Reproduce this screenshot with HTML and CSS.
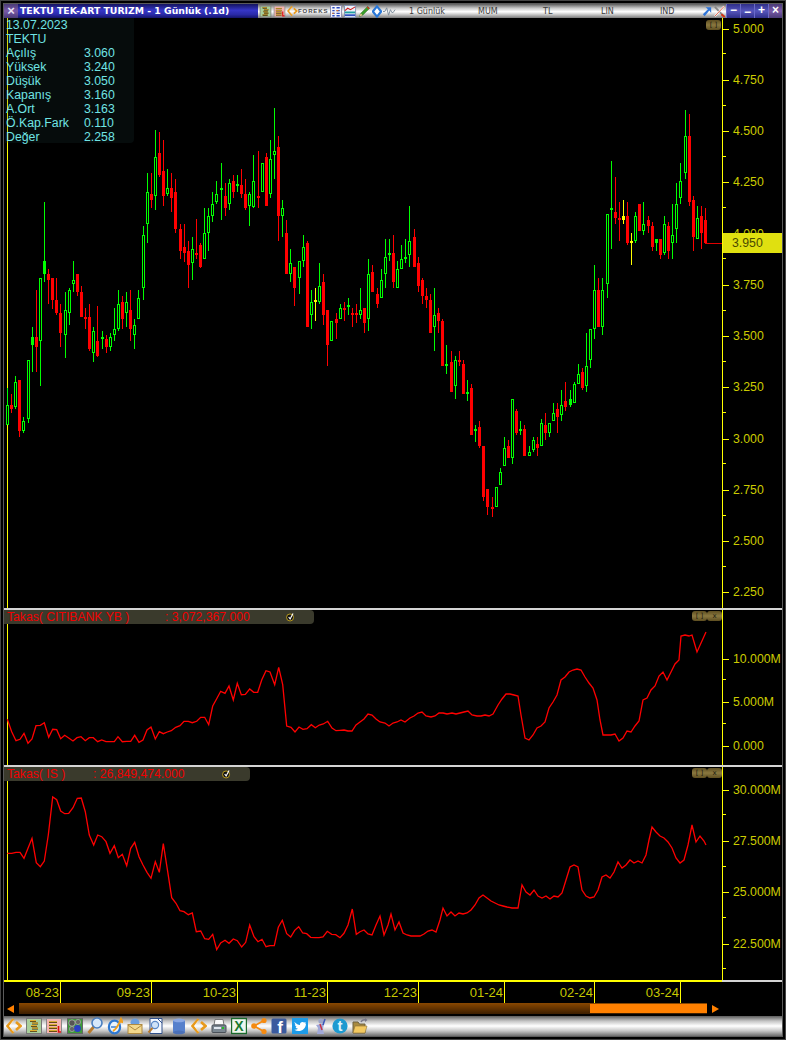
FILE: index.html
```html
<!DOCTYPE html>
<html lang="en">
<head>
    <meta charset="UTF-8">
    <title>TEKTU TEK-ART TURIZM</title>
    <link rel="stylesheet" href="styles.css">
</head>
<body>
    <svg class="icon-defs">
        <symbol id="i-chevrons" viewBox="0 0 16 18">
            <path d="M7.5 2 L1.5 9 L7.5 16" fill="none" stroke="#e89a1c" stroke-width="2.6"/>
            <path d="M10 5 L14.5 9 L10 13" fill="none" stroke="#e89a1c" stroke-width="2.6"/>
            <path d="M7.5 3.5 L3.5 9 L7.5 14.5" fill="none" stroke="#fff" stroke-width=".6"/>
        </symbol>
        <symbol id="i-coins" viewBox="0 0 16 18">
            <rect x=".5" y="1.5" width="15" height="15" fill="#a9cf9a" stroke="#777"/>
            <path d="M4 4 H10 M6 6.5 H12 M5 9 H11 M6 11.5 H12 M4 14 H11" stroke="#3c3418" stroke-width="2.2"/>
            <path d="M4 3.6 H10 M6 6.1 H12 M5 8.6 H11 M6 11.1 H12 M4 13.6 H11" stroke="#e0b030" stroke-width="1.1"/>
        </symbol>
        <symbol id="i-pink" viewBox="0 0 16 18">
            <rect x=".5" y="1.5" width="15" height="15" fill="#f4b4b0" stroke="#888"/>
            <path d="M3 5 H11 M3 8 H11 M3 11 H11 M3 14 H11" stroke="#5a4010" stroke-width="2"/>
            <path d="M3 4.6 H11 M3 7.6 H11 M3 10.6 H11 M3 13.6 H11" stroke="#e8b838" stroke-width="1"/>
            <path d="M12.5 9 V15 H15" fill="none" stroke="#d81010" stroke-width="1.6"/>
        </symbol>
        <symbol id="i-globe" viewBox="0 0 16 18">
            <rect x=".5" y="1.5" width="15" height="15" fill="#3d9a38" stroke="#666"/>
            <circle cx="5" cy="6" r="3.2" fill="#555" stroke="#ccc" stroke-width=".6"/>
            <circle cx="11" cy="5" r="2.6" fill="#666" stroke="#bbb" stroke-width=".6"/>
            <circle cx="5" cy="12" r="2.6" fill="#666" stroke="#bbb" stroke-width=".6"/>
            <circle cx="10.5" cy="11.5" r="3.4" fill="#2a3ec8"/>
        </symbol>
        <symbol id="i-lens" viewBox="0 0 16 18">
            <path d="M7 9.5 L1.5 16" stroke="#b87a2c" stroke-width="2.8"/>
            <circle cx="10" cy="6" r="5" fill="#d6e8fb" stroke="#4a7fc0" stroke-width="1.6"/>
        </symbol>
        <symbol id="i-ie" viewBox="0 0 16 18">
            <ellipse cx="7.5" cy="10" rx="5.6" ry="6.4" fill="#eaf3fc" stroke="#2f78d0" stroke-width="2.2"/>
            <path d="M4 10 H10" stroke="#2f78d0" stroke-width="1.4"/>
            <path d="M6 14 C10 12 12 7 14 2 L15.5 5 L12 4" fill="none" stroke="#f2a01e" stroke-width="2"/>
        </symbol>
        <symbol id="i-mail" viewBox="0 0 16 18">
            <ellipse cx="8" cy="5.5" rx="4.5" ry="4" fill="#6a9ede"/>
            <rect x="1" y="7.5" width="14" height="9" fill="#f2d88c" stroke="#b08a40"/>
            <path d="M1 8 L8 13 L15 8" fill="none" stroke="#b08a40"/>
        </symbol>
        <symbol id="i-doc" viewBox="0 0 16 18">
            <path d="M3 1.5 H15 V16.5 H3 Z" fill="#f4f8ff" stroke="#30508a"/>
            <path d="M11 2 L15 6" stroke="#30508a"/>
            <circle cx="8" cy="8" r="3.6" fill="#cfe2f8" stroke="#5a88c8" stroke-width="1.2"/>
            <path d="M5.5 11 L1.5 15.5" stroke="#b87a2c" stroke-width="2"/>
        </symbol>
        <symbol id="i-db" viewBox="0 0 16 18">
            <rect x="2" y="3" width="12" height="12.5" rx="1" fill="#5680cc"/>
            <ellipse cx="8" cy="3.4" rx="6" ry="1.8" fill="#8aa8e4"/>
            <ellipse cx="8" cy="15.4" rx="6" ry="1.8" fill="#4a70b8"/>
        </symbol>
        <symbol id="i-print" viewBox="0 0 16 18">
            <path d="M4 2.5 H12 L13 8 H3 Z" fill="#fafafa" stroke="#777"/>
            <rect x="1" y="8" width="14" height="7.5" rx="1" fill="#7a8690" stroke="#4a5058"/>
            <rect x="3" y="10" width="7" height="2" fill="#dfe6ee"/>
            <rect x="11" y="10" width="2" height="2" fill="#22c020"/>
        </symbol>
        <symbol id="i-share" viewBox="0 0 16 18">
            <path d="M13 3.5 L3 9 L13 14.5" fill="none" stroke="#f58a10" stroke-width="1.8"/>
            <circle cx="13" cy="3.5" r="2.6" fill="#f58a10"/>
            <circle cx="3" cy="9" r="2.8" fill="#f58a10"/>
            <circle cx="13" cy="14.5" r="2.6" fill="#f58a10"/>
        </symbol>
        <symbol id="i-tw" viewBox="0 0 16 18">
            <rect y="1" width="16" height="16" fill="#1d9be8"/>
            <path d="M2.5 5 C4.5 7 6 8 8 8 C7.6 5.5 10.5 4 12.2 5.6 L13.8 5 L13 6.6 L14 6.4 C13.8 11 10.5 14 6.5 14 C5 14 3.6 13.6 2.4 12.8 C3.8 12.9 5 12.5 6 11.8 C4.8 11.6 4 11 3.6 10 L4.8 10 C3.6 9.4 2.9 8.4 2.9 7.2 L4 7.6 C2.8 6.8 2.4 6 2.5 5 Z" fill="#fff"/>
        </symbol>
        <symbol id="i-person" viewBox="0 0 16 18">
            <circle cx="9" cy="4" r="2.6" fill="#9aa4c8"/>
            <path d="M4 8 L12 6.5 L11 12 L12 17 H5 L6 11 Z" fill="#a0a8d8"/>
            <path d="M8 7 L10 13" stroke="#c83040" stroke-width="1.4"/>
            <path d="M13 2 L11 8" stroke="#3a58b8" stroke-width="1.6"/>
        </symbol>
        <symbol id="i-folder" viewBox="0 0 16 18">
            <path d="M1 5 H6 L7.5 7 H13 V16 H1 Z" fill="#a88a40" stroke="#6c6040"/>
            <path d="M3 9 H15 L13 16 H1 Z" fill="#f2c860" stroke="#8a7038" stroke-width=".6"/>
            <path d="M9 5 C10 3 12 2.5 13.5 3" fill="none" stroke="#778" stroke-width="1.5"/>
            <path d="M13 1 L15.5 3 L13 5 Z" fill="#778"/>
        </symbol>
        <symbol id="i-calc" viewBox="0 0 14 14">
            <rect x=".5" y=".5" width="12" height="13" fill="#f2f2fa" stroke="#8888a8"/>
            <path d="M2.5 3 H5 M7 3 H10.5 M2.5 6 H5 M7 6 H10.5 M2.5 9 H5 M7 9 H10.5 M2.5 11.5 H5 M7 11.5 H10.5" stroke="#2a4ac0" stroke-width="1.5"/>
            <path d="M7 6 H9 M2.5 9 H4" stroke="#e07020" stroke-width="1.5"/>
        </symbol>
        <symbol id="i-chart" viewBox="0 0 14 14">
            <rect x=".5" y=".5" width="12" height="13" fill="#eef2fa" stroke="#8090b0"/>
            <path d="M1 6 L4 3.5 L7 5 L12 2" fill="none" stroke="#d02020" stroke-width="1.2"/>
            <path d="M1 8 H12" stroke="#20a0a0" stroke-width="2"/>
            <path d="M1 11 H12" stroke="#3050c0" stroke-width="2"/>
        </symbol>
        <symbol id="i-pen" viewBox="0 0 14 14">
            <path d="M1.5 12.5 L3 9 L10.5 1.5 L12.5 3.5 L5 11 Z" fill="#3ca02c" stroke="#2c6a20" stroke-width=".6"/>
            <path d="M1.5 12.5 L3 9 L5 11 Z" fill="#e8c890"/>
            <path d="M10 2 L12 4" stroke="#d83020" stroke-width="1.4"/>
        </symbol>
        <symbol id="i-diamond" viewBox="0 0 10 14">
            <path d="M5 1.5 L9.5 7 L5 12.5 L.5 7 Z" fill="#fff" stroke="#2a78d8" stroke-width="2.4"/>
        </symbol>
        <symbol id="i-wave" viewBox="0 0 14 14">
            <path d="M0 7 H2 L4 3 L6 11 L8 5 L9.5 8 H11 L13 5" fill="none" stroke="#7a8a9a"/>
        </symbol>
        <symbol id="i-arrow" viewBox="0 0 10 14">
            <path d="M.5 10 L6 4.5 L3.5 2.5 H9.5 V8.5 L7.5 6 L2.5 12 Z" fill="#2e74d8"/>
        </symbol>
        <symbol id="i-tools" viewBox="0 0 14 14">
            <path d="M2 2 L12 12.5" stroke="#888" stroke-width="2"/>
            <path d="M12 1.5 L2 12" stroke="#fff" stroke-width="2"/>
            <path d="M12 1.5 L2 12" stroke="#d84020" stroke-width=".9"/>
            <path d="M9 10 L12.5 13" stroke="#d83010" stroke-width="2"/>
        </symbol>
        <symbol id="i-check" viewBox="0 0 10 10">
            <circle cx="4.5" cy="5.5" r="3.9" fill="#111" stroke="#c8a820" stroke-width="1"/>
            <path d="M3 5 L4.6 7.2 L7.8 1" fill="none" stroke="#fff" stroke-width="1.3"/>
        </symbol>
    </svg>

    <div class="window">
        <div class="frame">
            <div class="titlebar">
                <span class="title-close">×</span>
                <div class="title-text">TEKTU TEK-ART TURIZM - 1 Günlük (.1d)</div>
                <div class="bar">
                    <svg class="bar-icon"><use href="#i-coins"/></svg>
                    <svg class="bar-icon"><use href="#i-pink"/></svg>
                    <div class="foreks">
                        <svg class="foreks-mark"><use href="#i-chevrons"/></svg>
                        <span>FOREKS</span>
                    </div>
                    <svg class="bar-icon"><use href="#i-calc"/></svg>
                    <svg class="bar-icon"><use href="#i-chart"/></svg>
                    <svg class="bar-icon"><use href="#i-pen"/></svg>
                    <svg class="bar-icon bar-icon-small"><use href="#i-diamond"/></svg>
                    <svg class="bar-icon"><use href="#i-wave"/></svg>
                    <div class="bar-menu">
                        <span class="menu-period">1 Günlük</span>
                        <span class="menu-mum">MUM</span>
                        <span class="menu-tl">TL</span>
                        <span class="menu-lin">LIN</span>
                        <span class="menu-ind">IND</span>
                    </div>
                    <svg class="bar-icon bar-icon-small"><use href="#i-arrow"/></svg>
                    <svg class="bar-icon"><use href="#i-tools"/></svg>
                </div>
                <div class="win-buttons">
                    <span class="win-btn">−</span>
                    <span class="win-btn win-btn-low">−</span>
                    <span class="win-btn">+</span>
                    <span class="win-btn win-btn-close">×</span>
                </div>
            </div>

            <div class="pane pane-price">
                <div class="plot">
                    <svg id="price-chart" class="chart" viewBox="4 18 718 590"></svg>
                    <div class="quote-box">
                        <div class="quote-row">13.07.2023</div>
                        <div class="quote-row">TEKTU</div>
                        <div class="quote-row"><span class="quote-label">Açılış</span><span>3.060</span></div>
                        <div class="quote-row"><span class="quote-label">Yüksek</span><span>3.240</span></div>
                        <div class="quote-row"><span class="quote-label">Düşük</span><span>3.050</span></div>
                        <div class="quote-row"><span class="quote-label">Kapanış</span><span>3.160</span></div>
                        <div class="quote-row"><span class="quote-label">A.Ort</span><span>3.163</span></div>
                        <div class="quote-row"><span class="quote-label">Ö.Kap.Fark</span><span>0.110</span></div>
                        <div class="quote-row"><span class="quote-label">Değer</span><span>2.258</span></div>
                    </div>
                    <div class="pane-buttons pane-buttons-top">
                        <span class="pane-btn">[ ]</span>
                    </div>
                </div>
                <div class="axis">
                    <div class="scale scale-price">
                        <div class="tick">5.000</div>
                        <div class="tick">4.750</div>
                        <div class="tick">4.500</div>
                        <div class="tick">4.250</div>
                        <div class="tick">4.000</div>
                        <div class="tick">3.750</div>
                        <div class="tick">3.500</div>
                        <div class="tick">3.250</div>
                        <div class="tick">3.000</div>
                        <div class="tick">2.750</div>
                        <div class="tick">2.500</div>
                        <div class="tick">2.250</div>
                    </div>
                    <div class="price-tag">3.950</div>
                </div>
            </div>
            <div class="divider"></div>

            <div class="pane pane-citi">
                <div class="plot">
                    <svg id="citi-chart" class="chart" viewBox="4 610 718 155"></svg>
                    <div class="legend legend-citi">
                        <span class="legend-name">Takas( CITIBANK YB )</span>
                        <span>: 3,072,367.000</span>
                        <svg class="legend-check"><use href="#i-check"/></svg>
                    </div>
                    <div class="pane-buttons">
                        <span class="pane-btn">[ ]</span>
                        <span class="pane-btn">x</span>
                    </div>
                </div>
                <div class="axis">
                    <div class="scale scale-citi">
                        <div class="tick">10.000M</div>
                        <div class="tick">5.000M</div>
                        <div class="tick">0.000</div>
                    </div>
                </div>
            </div>
            <div class="divider"></div>

            <div class="pane pane-is">
                <div class="plot">
                    <svg id="is-chart" class="chart" viewBox="4 767 718 213"></svg>
                    <div class="legend legend-is">
                        <span class="legend-name">Takas( IS )</span>
                        <span>: 26,849,474.000</span>
                        <svg class="legend-check"><use href="#i-check"/></svg>
                    </div>
                    <div class="pane-buttons">
                        <span class="pane-btn">[ ]</span>
                        <span class="pane-btn">x</span>
                    </div>
                </div>
                <div class="axis">
                    <div class="scale scale-is">
                        <div class="tick">30.000M</div>
                        <div class="tick">27.500M</div>
                        <div class="tick">25.000M</div>
                        <div class="tick">22.500M</div>
                    </div>
                </div>
            </div>
            <div class="divider divider-time"></div>

            <div class="time-axis">
                <span>08-23</span>
                <span>09-23</span>
                <span>10-23</span>
                <span>11-23</span>
                <span>12-23</span>
                <span>01-24</span>
                <span>02-24</span>
                <span>03-24</span>
            </div>

            <div class="scroller">
                <span class="arrow-left"></span>
                <div class="scroll-track"><div class="scroll-handle"></div></div>
                <span class="arrow-right"></span>
            </div>

            <div class="toolbar">
                <svg class="tool"><use href="#i-chevrons"/></svg>
                <svg class="tool"><use href="#i-coins"/></svg>
                <svg class="tool"><use href="#i-pink"/></svg>
                <svg class="tool"><use href="#i-globe"/></svg>
                <svg class="tool"><use href="#i-lens"/></svg>
                <svg class="tool"><use href="#i-ie"/></svg>
                <svg class="tool"><use href="#i-mail"/></svg>
                <svg class="tool"><use href="#i-doc"/></svg>
                <svg class="tool tool-sep"><use href="#i-db"/></svg>
                <svg class="tool"><use href="#i-chevrons"/></svg>
                <svg class="tool"><use href="#i-print"/></svg>
                <svg class="tool" viewBox="0 0 16 18">
                    <rect x=".5" y="1.5" width="15" height="15" fill="#eef6ee" stroke="#1a6a2c" stroke-width="1.4"/>
                    <text x="8" y="14" class="icon-letter icon-excel">X</text>
                </svg>
                <svg class="tool"><use href="#i-share"/></svg>
                <svg class="tool" viewBox="0 0 16 18">
                    <rect x=".5" y="1.5" width="15" height="15" rx="1.5" fill="#3a5a9e"/>
                    <text x="9" y="15.5" class="icon-letter icon-fb">f</text>
                </svg>
                <svg class="tool"><use href="#i-tw"/></svg>
                <svg class="tool"><use href="#i-person"/></svg>
                <svg class="tool" viewBox="0 0 16 18">
                    <circle cx="8" cy="9" r="7.6" fill="#1d9ad0"/>
                    <text x="8" y="14" class="icon-letter icon-t">t</text>
                </svg>
                <svg class="tool"><use href="#i-folder"/></svg>
            </div>
        </div>
    </div>

    <script src="chart.js"></script>
</body>
</html>
```

FILE: styles.css
```css
* {
    box-sizing: border-box;
}
body {
    margin: 0;
    background: #000;
    font-family: "Liberation Sans", Arial, sans-serif;
}
.icon-defs {
    display: block;
    width: 0;
    height: 0;
}
.icon-letter {
    font-family: "Liberation Sans", Arial, sans-serif;
    font-weight: bold;
    text-anchor: middle;
}
.icon-excel {
    font-size: 14px;
    fill: #1a7a30;
}
.icon-fb {
    font-size: 17px;
    fill: #fff;
}
.icon-t {
    font-size: 15px;
    fill: #dff4fc;
}
.window {
    width: 786px;
    height: 1040px;
    padding: 2px;
    background: #000;
    border: 1px solid #444;
}
.frame {
    display: flex;
    flex-direction: column;
    height: 100%;
    border: 1px solid #5a5a5a;
}

/* title bar */
.titlebar {
    display: flex;
    height: 14px;
    flex: none;
}
.title-close {
    width: 14px;
    background: linear-gradient(#4a3a78, #7a5aa8 50%, #4a3a78);
    color: #e8e0f4;
    font-size: 13px;
    font-weight: bold;
    line-height: 14px;
    text-align: center;
}
.title-text {
    width: 240px;
    padding-left: 2px;
    background: linear-gradient(#14145e, #3636c8 45%, #2a2aa8 75%, #14146a);
    color: #fff;
    font-family: "DejaVu Sans", sans-serif;
    font-size: 9.3px;
    font-weight: bold;
    line-height: 14px;
    white-space: nowrap;
}
.bar {
    display: flex;
    align-items: center;
    gap: 1px;
    width: 468px;
    padding-left: 1px;
    background: linear-gradient(#5c5c5c, #c8c8c8 30%, #fff 55%, #c8c8c8 75%, #7a7a7a);
}
.bar-icon {
    flex: none;
    width: 13px;
    height: 13px;
}
.bar-icon-small {
    width: 10px;
}
.foreks {
    display: flex;
    align-items: center;
    width: 42px;
    color: #4a4a4a;
    font-size: 6px;
    font-weight: bold;
    letter-spacing: 0.9px;
}
.foreks-mark {
    flex: none;
    width: 11px;
    height: 12px;
}
.bar-menu {
    display: flex;
    color: #3c3c3c;
    font-family: "DejaVu Sans", sans-serif;
    font-size: 8px;
    line-height: 15px;
}
.menu-period {
    width: 81px;
    padding-left: 12px;
}
.menu-mum {
    width: 65px;
}
.menu-tl {
    width: 58px;
}
.menu-lin {
    width: 59px;
}
.menu-ind {
    width: 41px;
}
.win-buttons {
    display: flex;
}
.win-btn {
    width: 14px;
    background: linear-gradient(#2e2e88, #5656bc 50%, #2e2e88);
    border-left: 1px solid #6a6ac8;
    color: #fff;
    font-size: 12px;
    font-weight: bold;
    line-height: 13px;
    text-align: center;
}
.win-btn-low {
    line-height: 16px;
}
.win-btn-close {
    background: linear-gradient(#4a3a78, #7a5aa8 50%, #4a3a78);
}

/* chart panes */
.pane {
    display: flex;
    flex: none;
    overflow: hidden;
}
.pane-price {
    height: 590px;
}
.pane-citi {
    height: 155px;
}
.pane-is {
    height: 213px;
}
.plot {
    position: relative;
    width: 718px;
}
.chart {
    display: block;
    width: 718px;
    height: 100%;
    shape-rendering: crispEdges;
}
.divider {
    flex: none;
    height: 2px;
    background: #d4d4d4;
}
.divider-time {
    background: linear-gradient(to right, #ffff00 718px, #d4d4d4 718px);
}

/* value axis */
.axis {
    position: relative;
    width: 60px;
    border-left: 1px solid #ffff00;
    overflow: hidden;
}
.scale-price {
    margin-top: -14.9px;
}
.scale-citi {
    margin-top: 26.8px;
}
.scale-is {
    margin-top: -3.2px;
}
.tick {
    position: relative;
    display: flex;
    align-items: center;
    height: 51.25px;
    padding-left: 10px;
    color: #cccc00;
    font-size: 12.3px;
}
.scale-citi .tick {
    height: 43.5px;
}
.scale-is .tick {
    height: 51.4px;
}
.tick::before {
    content: "";
    position: absolute;
    left: 0;
    top: 50%;
    width: 6px;
    height: 1px;
    background: #ffff00;
}
.tick::after {
    content: "";
    position: absolute;
    left: 0;
    bottom: 0;
    width: 3px;
    height: 1px;
    background: #ffff00;
}
.price-tag {
    position: absolute;
    top: 215px;
    left: -1px;
    width: 60px;
    height: 20px;
    padding-left: 10px;
    background: #e0e010;
    color: #4a4a00;
    font-size: 12.3px;
    line-height: 20px;
}

/* overlays on the plots */
.quote-box {
    position: absolute;
    top: 0;
    left: 1px;
    width: 129px;
    height: 125px;
    padding: 0 0 0 1px;
    background: rgba(30, 60, 60, 0.2);
    border-radius: 0 0 4px 0;
    color: #70e4e4;
    font-size: 12.3px;
    line-height: 14px;
}
.quote-row {
    display: flex;
}
.quote-label {
    width: 78px;
}
.legend {
    position: absolute;
    top: 0;
    left: 0;
    display: flex;
    align-items: center;
    height: 14px;
    padding-left: 3px;
    padding-right: 19px;
    background: #3a3a2c;
    border-radius: 0 4px 4px 0;
    color: #f00000;
    font-size: 12.2px;
    white-space: nowrap;
}
.legend-citi {
    width: 310px;
}
.legend-is {
    width: 246px;
}
.legend-citi .legend-name {
    width: 158px;
}
.legend-is .legend-name {
    width: 86px;
}
.legend-check {
    width: 9px;
    height: 10px;
    margin-left: auto;
}
.pane-buttons {
    position: absolute;
    top: 1px;
    right: 0;
    display: flex;
}
.pane-buttons-top {
    top: 2px;
    right: 1px;
}
.pane-btn {
    width: 15px;
    height: 10px;
    background: linear-gradient(#5e4e20, #8a7840 50%, #5e4e20);
    border-radius: 3px;
    color: #1c1c10;
    font-family: "DejaVu Sans", sans-serif;
    font-size: 7px;
    line-height: 10px;
    text-align: center;
}

/* time axis and scroller */
.time-axis {
    display: grid;
    grid-template-columns: 57px 91px 86px 90px 91px 86px 90px 86px;
    flex: none;
    height: 21px;
}
.time-axis span {
    padding-right: 1px;
    border-right: 1px solid #ffff00;
    color: #c8c800;
    font-size: 13px;
    line-height: 21px;
    text-align: right;
}
.scroller {
    display: flex;
    align-items: center;
    flex: none;
    height: 11px;
    margin-bottom: 2px;
    padding-left: 3px;
}
.arrow-left {
    width: 0;
    height: 0;
    border-top: 4px solid transparent;
    border-bottom: 4px solid transparent;
    border-right: 7px solid #ff8000;
}
.arrow-right {
    width: 0;
    height: 0;
    margin-left: 5px;
    border-top: 4px solid transparent;
    border-bottom: 4px solid transparent;
    border-left: 7px solid #ff8000;
}
.scroll-track {
    display: flex;
    justify-content: flex-end;
    align-items: center;
    width: 688px;
    height: 11px;
    margin-left: 5px;
    background: linear-gradient(#8a4800, #3c1e00);
}
.scroll-handle {
    width: 117px;
    height: 9px;
    background: #ff8000;
}

/* bottom toolbar */
.toolbar {
    display: flex;
    align-items: center;
    gap: 4.2px;
    flex: none;
    height: 20px;
    padding-left: 2px;
    background: linear-gradient(#5c5c5c, #c4c4c4 25%, #fff 50%, #c4c4c4 75%, #6e6e6e);
}
.tool {
    flex: none;
    width: 16px;
    height: 18px;
}
.tool-sep {
    margin-left: 3px;
}
```

FILE: chart.js
```js
// Everything is traced from 3x crops, so each group has the page origin of its crop
// and the numbers are crop pixels: x, wick top, wick bottom, body top, body bottom, kind.
// kind: u = hollow green, U = solid green, d = solid red, y = solid yellow
const candleGroups = [
    { x: 0, y: 240, rows: [
        [22,444,555,496,555,'u'], [34,462,519,496,507,'d'], [46,408,507,427,501,'u'], [58,420,591,420,573,'d'],
        [70,531,579,543,573,'u'], [85,360,549,361,537,'u'], [97,261,396,291,315,'U'], [109,150,396,291,321,'d'],
        [121,114,438,114,303,'u'], [133,-114,126,63,102,'U']
    ] },
    { x: 0, y: 120, rows: [
        [145,447,552,462,480,'d'], [157,474,568,474,540,'d'], [169,474,584,540,580,'d'], [181,552,682,580,640,'d'],
        [196,516,714,571,644,'u'], [208,504,614,511,578,'u'], [220,423,516,481,491,'u'], [232,462,528,462,516,'d'],
        [244,498,591,516,591,'d'], [256,564,627,591,597,'d'], [268,552,693,591,688,'d'], [280,621,726,633,698,'u'],
        [292,558,711,663,708,'d'], [307,633,687,651,657,'U'], [319,645,699,657,681,'d'], [331,639,693,651,681,'u'],
        [343,564,663,627,645,'u'], [355,510,633,552,627,'u'], [367,528,627,546,597,'d'], [379,516,621,546,579,'u'],
        [391,510,663,570,627,'d'], [403,597,687,615,645,'u'], [415,510,597,535,597,'u'], [430,318,540,345,503,'u'],
        [442,159,369,216,312,'u'], [454,159,264,222,240,'d'], [466,30,270,111,228,'u'], [478,36,171,99,165,'d'],
        [490,60,258,153,228,'d'], [502,147,228,204,222,'u'], [514,159,276,204,234,'d'], [526,177,339,216,327,'d'],
        [541,312,417,327,393,'d'], [553,312,426,381,399,'d'], [565,363,504,393,435,'d'], [577,351,480,387,429,'u'],
        [589,297,417,399,405,'d']
    ] },
    { x: 200, y: 100, rows: [
        [1,430,505,435,500,'d'],
        [13,324,476,400,476,'u'], [25,324,453,348,398,'u'], [37,277,365,313,347,'u'], [49,243,312,283,305,'u'],
        [64,190,360,265,269,'U'], [76,250,348,289,323,'d'], [88,238,330,250,311,'u'], [100,225,294,244,275,'d'],
        [112,225,275,252,257,'U'], [124,207,294,256,282,'d'], [136,237,330,282,323,'d'], [148,277,378,283,317,'u'],
        [160,165,323,244,322,'u'], [175,153,323,288,293,'d'], [187,190,276,190,275,'u'], [199,160,318,172,318,'d'],
        [211,120,293,178,281,'u'], [223,24,237,154,164,'u'], [235,108,423,142,347,'d'], [247,300,411,325,347,'u'],
        [259,360,522,400,522,'d'], [271,447,546,490,521,'u'], [283,502,618,502,564,'d'], [298,484,582,484,533,'u'],
        [310,405,500,442,482,'u'], [322,423,682,430,682,'d'], [334,570,687,607,644,'u'], [346,564,663,600,606,'y'],
        [358,489,612,559,606,'u'], [370,522,675,546,645,'d'], [382,630,798,630,735,'d'], [394,663,722,664,722,'u'],
        [409,640,717,657,669,'d'], [421,612,657,625,656,'u'], [433,606,663,625,630,'d'], [445,594,645,615,621,'U'],
        [457,625,681,639,645,'d'], [469,612,669,639,645,'d'], [481,564,657,631,645,'u'], [493,625,699,625,669,'d'],
        [505,477,693,522,656,'u'], [517,496,576,516,576,'d'], [532,564,624,582,612,'d'], [544,507,594,541,593,'u'],
        [556,417,564,472,521,'u'], [568,417,483,459,465,'U'], [580,405,564,459,546,'d'], [592,483,564,508,563,'u'],
        [604,435,507,478,506,'u'], [616,417,488,471,477,'U'], [628,318,501,424,464,'u'], [643,387,501,411,501,'d'],
        [655,471,576,489,558,'d']
    ] },
    { x: 420, y: 230, rows: [
        [7,145,222,150,198,'d'], [19,174,234,198,210,'d'], [31,192,309,210,309,'d'], [43,174,363,255,290,'u'],
        [55,234,309,249,273,'d'], [67,267,408,274,408,'d'], [79,345,432,403,408,'U'], [94,363,486,396,486,'d'],
        [106,378,507,391,467,'u'], [118,363,408,390,396,'d'], [130,390,492,402,492,'d'], [142,450,513,486,492,'U'],
        [154,462,615,474,615,'d'], [166,585,636,597,603,'U'], [178,573,654,591,648,'d'], [190,648,813,648,801,'d'],
        [202,777,855,777,831,'d'], [217,801,861,831,837,'d'], [229,771,831,772,830,'u'], [241,714,765,727,764,'u'],
        [253,621,708,655,707,'u'], [265,630,684,648,684,'d'], [277,507,702,508,683,'u'], [289,537,615,543,609,'d'],
        [301,573,615,597,603,'U'], [313,585,678,597,678,'d'], [328,648,678,667,677,'u'], [340,621,666,631,660,'u'],
        [352,621,678,642,654,'d'], [364,567,648,580,647,'u'], [376,549,630,585,609,'d'], [388,580,621,580,608,'u'],
        [400,519,573,550,572,'u'], [412,519,609,537,561,'d'], [424,480,573,526,554,'u'], [436,456,543,513,531,'d'],
        [451,480,531,507,525,'U'], [463,456,519,463,518,'u'], [475,402,462,433,461,'u'], [487,414,480,426,474,'d'],
        [499,309,486,409,467,'u'], [511,297,414,298,389,'u'], [523,105,327,181,296,'u'], [535,144,291,180,291,'d'],
        [547,144,315,181,290,'u']
    ] },
    { x: 600, y: 100, rows: [
        [22,343,594,343,551,'u'], [34,183,447,324,329,'U'], [46,231,372,336,354,'d'], [58,306,423,354,360,'d'],
        [70,300,372,348,360,'y'], [82,306,435,348,429,'d'], [94,399,495,423,429,'y'], [106,336,429,348,423,'u'],
        [118,312,393,312,393,'d'], [130,306,405,372,393,'u'], [145,348,399,360,378,'d'], [157,366,453,378,441,'d'],
        [169,417,453,417,429,'U'], [181,417,477,417,465,'d'], [193,348,465,372,459,'u'], [205,366,477,378,453,'d'],
        [217,312,477,405,429,'u'], [229,249,429,312,387,'u'], [241,189,312,243,294,'u'], [256,30,237,108,219,'u'],
        [268,42,318,108,306,'d'], [280,288,453,300,411,'d'], [292,318,417,354,417,'u'], [304,318,447,348,399,'d'],
        [316,324,430,360,430,'d']
    ] }
];

const candleColors = { u: '#00ff00', U: '#00ff00', d: '#ff0000', y: '#ffff00' };

function drawCandle(group, row) {
    const px = Math.floor(group.x + row[0] / 3);
    const wickTop = Math.round(group.y + row[1] / 3);
    const wickBottom = Math.round(group.y + row[2] / 3);
    const bodyTop = Math.round(group.y + row[3] / 3);
    const bodyBottom = Math.round(group.y + row[4] / 3);
    const color = candleColors[row[5]];

    let out = `<rect x="${px}" y="${wickTop}" width="1" height="${wickBottom - wickTop}" fill="${color}"/>`;
    if (row[5] === 'u') {
        out += `<rect x="${px - 0.5}" y="${bodyTop + 0.5}" width="2" height="${bodyBottom - bodyTop - 1}" fill="#000" stroke="${color}"/>`;
    } else {
        out += `<rect x="${px - 1}" y="${bodyTop}" width="3" height="${Math.max(bodyBottom - bodyTop, 2)}" fill="${color}"/>`;
    }
    return out;
}

function yellowEdge(top, height) {
    return `<rect x="7" y="${top}" width="1" height="${height}" fill="#ffff00"/>`;
}

// price pane
let priceSvg = yellowEdge(18, 590);
for (const group of candleGroups) {
    for (const row of group.rows) {
        priceSvg += drawCandle(group, row);
    }
}
priceSvg += '<rect x="705" y="243" width="17" height="1" fill="#e00000"/>';
document.getElementById('price-chart').innerHTML = priceSvg;

// the indicator lines: a 3x crop for the left part, page pixels for the rest
function cropPoints(originY, flat) {
    const pts = [];
    for (let i = 0; i < flat.length; i += 2) {
        pts.push((flat[i] / 3).toFixed(1) + ',' + (originY + flat[i + 1] / 3).toFixed(1));
    }
    return pts;
}

function pagePoints(flat) {
    const pts = [];
    for (let i = 0; i < flat.length; i += 2) {
        pts.push(flat[i] + ',' + flat[i + 1]);
    }
    return pts;
}

function drawLine(id, top, height, pts) {
    const svg = document.getElementById(id);
    svg.innerHTML = yellowEdge(top, height) +
        `<polyline points="${pts.join(' ')}" fill="none" stroke="#ff0000" stroke-width="1.3" shape-rendering="auto"/>`;
}

const citiLine = cropPoints(600, [
    22,358, 35,395, 48,422, 60,418, 72,400, 84,430, 96,417, 108,377, 121,376, 133,368, 146,412, 158,388, 170,389,
    182,416, 194,406, 206,414, 219,423, 231,413, 243,410, 256,422, 268,413, 280,413, 293,425, 305,420, 318,425,
    330,425, 343,425, 354,410, 367,425, 380,424, 392,424, 404,406, 417,427, 429,420, 441,390, 453,381, 466,417,
    478,395, 490,401, 502,396, 514,392, 527,382, 540,377, 552,364, 565,364, 577,368, 590,364, 602,352, 614,352,
    626,374, 638,318, 650,296, 662,274, 675,280, 687,258, 700,300, 712,250, 724,284, 736,283, 749,267, 761,277,
    773,277, 785,240, 798,212, 810,216, 824,254, 836,202, 848,254, 860,378, 873,382, 885,396, 897,381, 909,388,
    921,386, 934,374, 946,383, 958,375, 970,372, 983,364, 996,384, 1008,392, 1020,391
]).concat(pagePoints([
    344,730, 348,731, 352,731, 356,725, 360,722, 364,719, 368,714, 372,715, 376,719, 380,722, 385,723, 389,726,
    393,723, 397,722, 401,720, 405,722, 410,718, 414,716, 418,713, 422,712, 426,716, 431,717, 435,716, 439,713,
    443,713, 447,714, 452,713, 456,714, 460,713, 464,712, 468,711, 472,715, 477,716, 481,716, 485,715, 489,716,
    493,714, 498,705, 502,699, 506,694, 510,694, 514,695, 518,696, 521,715, 525,738, 529,740, 533,735, 537,728,
    541,726, 545,722, 549,708, 553,702, 557,695, 561,680, 565,677, 569,672, 573,670, 577,669, 581,670, 585,677,
    589,683, 593,688, 597,700, 600,720, 603,735, 607,735, 611,735, 615,734, 619,741, 623,738, 627,731, 631,732,
    635,726, 639,721, 643,700, 647,698, 651,690, 655,686, 659,676, 663,672, 667,680, 671,672, 675,664, 679,660,
    681,636, 685,635, 689,636, 692,635, 697,652, 706,632
]));
drawLine('citi-chart', 610, 155, citiLine);

const isLine = cropPoints(785, [
    22,205, 35,205, 48,202, 60,202, 72,220, 84,190, 96,160, 109,233, 121,245, 133,228, 145,150, 158,36, 170,44,
    182,78, 194,86, 206,85, 219,68, 232,40, 244,39, 256,80, 268,150, 281,180, 293,150, 305,155, 318,170, 330,205,
    343,182, 355,218, 367,208, 380,242, 392,190, 404,172, 417,215, 429,240, 441,262, 453,280, 466,230, 478,262,
    490,176, 503,260, 515,338, 528,355, 540,377, 552,380, 565,389, 577,384, 589,440, 602,438, 614,461, 626,463,
    638,448, 650,494, 662,474, 675,466, 687,475, 700,462, 712,467, 725,486, 737,472, 749,420, 762,455, 774,470,
    786,463, 798,485, 810,482, 823,482, 835,427, 847,406, 860,446, 872,456, 884,436, 896,425, 908,444, 920,446,
    932,457, 945,458, 957,458, 969,456, 982,439, 995,448, 1007,449, 1020,458, 1032,445, 1044,420, 1057,372,
    1069,448, 1080,440
]).concat(pagePoints([
    364,930, 368,934, 372,935, 376,925, 380,916, 384,935, 388,925, 391,914, 395,930, 399,922, 403,933, 407,935,
    411,936, 416,936, 420,936, 424,934, 428,931, 432,930, 436,932, 440,920, 443,908, 447,916, 451,912, 455,916,
    459,913, 463,914, 467,913, 471,910, 475,905, 479,898, 483,895, 487,898, 491,901, 495,903, 499,905, 503,906,
    507,907, 512,908, 518,908, 522,885, 526,892, 530,895, 534,890, 538,896, 542,898, 546,896, 550,899, 554,896,
    558,897, 562,893, 566,880, 570,867, 574,865, 578,867, 582,890, 586,896, 590,898, 594,897, 598,890, 602,877,
    606,875, 610,878, 614,872, 618,862, 622,868, 626,865, 630,860, 634,863, 638,861, 642,863, 646,855, 649,840,
    652,827, 656,832, 660,836, 664,838, 668,842, 672,848, 676,858, 680,863, 684,860, 688,845, 692,825, 696,842,
    700,836, 704,841, 706,845
]));
drawLine('is-chart', 767, 213, isLine);
```
